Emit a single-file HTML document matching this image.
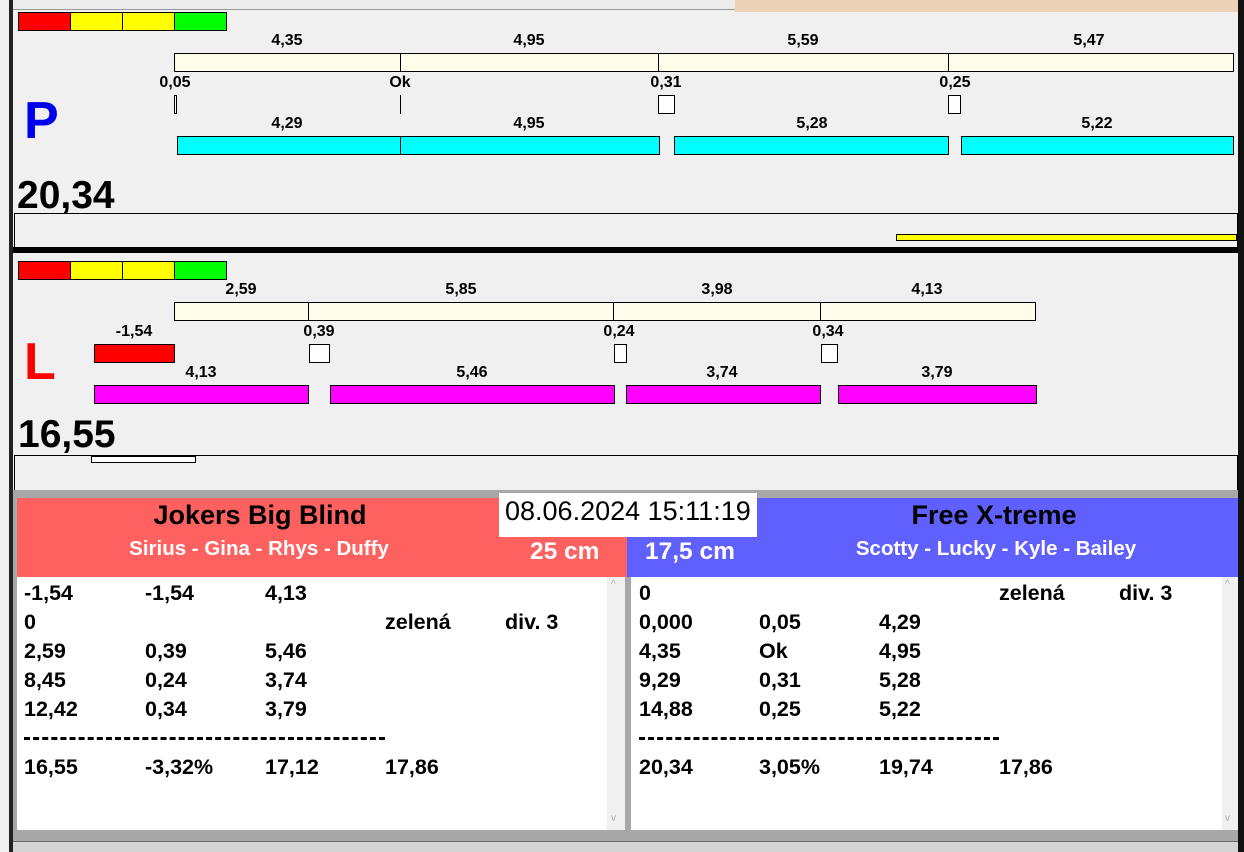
<!DOCTYPE html>
<html><head><meta charset="utf-8"><style>
*{margin:0;padding:0;box-sizing:border-box}
body{width:1244px;height:852px;background:#f0f0f0;position:relative;overflow:hidden;font-family:"Liberation Sans",Arial,sans-serif;font-weight:bold;color:#000}
div,span{position:absolute}
.b{border:1px solid #000}
.lb{font-size:16px;transform:translateX(-50%);white-space:nowrap;line-height:18px}
.bg{background:#fffdea}
.cy{background:#00ffff}
.mg{background:#ff00ff}
.row{font-size:21.5px;line-height:29px;white-space:nowrap}
</style></head><body>
<div style="left:9px;top:0;width:4px;height:852px;background:#222"></div>
<div style="left:1238px;top:0;width:6px;height:852px;background:#111"></div>
<div style="left:13px;top:0;width:722px;height:10px;background:#ececec;border-bottom:1px solid #999"></div>
<div style="left:735px;top:0;width:503px;height:12px;background:#eed2b8"></div>
<!-- P panel -->
<div style="left:18px;top:12px;width:53px;height:19px;background:#f00" class="b"></div>
<div style="left:70px;top:12px;width:53px;height:19px;background:#ff0" class="b"></div>
<div style="left:122px;top:12px;width:53px;height:19px;background:#ff0" class="b"></div>
<div style="left:174px;top:12px;width:53px;height:19px;background:#0f0" class="b"></div>

<span class="lb" style="left:287px;top:32px">4,35</span>
<span class="lb" style="left:529px;top:32px">4,95</span>
<span class="lb" style="left:803px;top:32px">5,59</span>
<span class="lb" style="left:1089px;top:32px">5,47</span>
<div class="b bg" style="left:174px;top:53px;width:227px;height:19px"></div>
<div class="b bg" style="left:400px;top:53px;width:259px;height:19px"></div>
<div class="b bg" style="left:658px;top:53px;width:291px;height:19px"></div>
<div class="b bg" style="left:948px;top:53px;width:286px;height:19px"></div>

<span class="lb" style="left:175px;top:74px">0,05</span>
<span class="lb" style="left:400px;top:74px">Ok</span>
<span class="lb" style="left:666px;top:74px">0,31</span>
<span class="lb" style="left:955px;top:74px">0,25</span>
<div class="b" style="left:174px;top:95px;width:3px;height:19px;background:#fff"></div>
<div style="left:400px;top:95px;width:1px;height:19px;background:#000"></div>
<div class="b" style="left:658px;top:95px;width:17px;height:19px;background:#fff"></div>
<div class="b" style="left:948px;top:95px;width:13px;height:19px;background:#fff"></div>

<span style="left:24px;top:91px;font-size:52px;color:#0000ee;line-height:60px">P</span>
<span class="lb" style="left:287px;top:115px">4,29</span>
<span class="lb" style="left:529px;top:115px">4,95</span>
<span class="lb" style="left:812px;top:115px">5,28</span>
<span class="lb" style="left:1097px;top:115px">5,22</span>
<div class="b cy" style="left:177px;top:136px;width:224px;height:19px"></div>
<div class="b cy" style="left:400px;top:136px;width:260px;height:19px"></div>
<div class="b cy" style="left:674px;top:136px;width:275px;height:19px"></div>
<div class="b cy" style="left:961px;top:136px;width:273px;height:19px"></div>

<span style="left:17px;top:175px;font-size:39px;line-height:42px">20,34</span>
<div style="left:14px;top:213px;width:1224px;height:34px;border-top:1px solid #000;border-left:1px solid #000;border-right:1px solid #000"></div>
<div class="b" style="left:896px;top:234px;width:341px;height:7px;background:#ff0"></div>
<div style="left:13px;top:247px;width:1225px;height:6px;background:#000"></div>

<!-- L panel -->
<div style="left:18px;top:261px;width:53px;height:19px;background:#f00" class="b"></div>
<div style="left:70px;top:261px;width:53px;height:19px;background:#ff0" class="b"></div>
<div style="left:122px;top:261px;width:53px;height:19px;background:#ff0" class="b"></div>
<div style="left:174px;top:261px;width:53px;height:19px;background:#0f0" class="b"></div>

<span class="lb" style="left:241px;top:281px">2,59</span>
<span class="lb" style="left:461px;top:281px">5,85</span>
<span class="lb" style="left:717px;top:281px">3,98</span>
<span class="lb" style="left:927px;top:281px">4,13</span>
<div class="b bg" style="left:174px;top:302px;width:136px;height:19px"></div>
<div class="b bg" style="left:308px;top:302px;width:307px;height:19px"></div>
<div class="b bg" style="left:613px;top:302px;width:209px;height:19px"></div>
<div class="b bg" style="left:820px;top:302px;width:216px;height:19px"></div>

<span class="lb" style="left:134px;top:323px">-1,54</span>
<span class="lb" style="left:319px;top:323px">0,39</span>
<span class="lb" style="left:619px;top:323px">0,24</span>
<span class="lb" style="left:828px;top:323px">0,34</span>
<div class="b" style="left:94px;top:344px;width:81px;height:19px;background:#f00"></div>
<div class="b" style="left:309px;top:344px;width:21px;height:19px;background:#fff"></div>
<div class="b" style="left:614px;top:344px;width:13px;height:19px;background:#fff"></div>
<div class="b" style="left:821px;top:344px;width:17px;height:19px;background:#fff"></div>

<span style="left:24px;top:332px;font-size:52px;color:#f00;line-height:60px">L</span>
<span class="lb" style="left:201px;top:364px">4,13</span>
<span class="lb" style="left:472px;top:364px">5,46</span>
<span class="lb" style="left:722px;top:364px">3,74</span>
<span class="lb" style="left:937px;top:364px">3,79</span>
<div class="b mg" style="left:94px;top:385px;width:215px;height:19px"></div>
<div class="b mg" style="left:330px;top:385px;width:285px;height:19px"></div>
<div class="b mg" style="left:626px;top:385px;width:195px;height:19px"></div>
<div class="b mg" style="left:838px;top:385px;width:199px;height:19px"></div>

<span style="left:18px;top:414px;font-size:39px;line-height:42px">16,55</span>
<div style="left:14px;top:455px;width:1224px;height:35px;border-top:1px solid #000;border-left:1px solid #000;border-right:1px solid #000"></div>
<div class="b" style="left:91px;top:456px;width:105px;height:7px;background:#fff"></div>

<!-- bottom -->
<div style="left:13px;top:490px;width:1225px;height:362px;background:#a8a8a8"></div>
<div style="left:17px;top:498px;width:610px;height:79px;background:#ff6060"></div>
<div style="left:627px;top:498px;width:611px;height:79px;background:#6060ff"></div>
<span style="left:260px;top:499px;transform:translateX(-50%);font-size:27px;line-height:32px;white-space:nowrap">Jokers Big Blind</span>
<span style="left:259px;top:537px;transform:translateX(-50%);font-size:20.5px;color:#fff;line-height:24px;white-space:nowrap">Sirius - Gina - Rhys - Duffy</span>
<span style="left:530px;top:538px;font-size:24.5px;color:#fff;line-height:28px">25 cm</span>
<span style="left:994px;top:499px;transform:translateX(-50%);font-size:27px;line-height:32px;white-space:nowrap">Free X-treme</span>
<span style="left:996px;top:537px;transform:translateX(-50%);font-size:20.5px;color:#fff;line-height:24px;white-space:nowrap">Scotty - Lucky - Kyle - Bailey</span>
<span style="left:645px;top:538px;font-size:24.5px;color:#fff;line-height:28px">17,5 cm</span>
<div style="left:499px;top:493px;width:258px;height:44px;background:#fff"></div>
<span style="left:505px;top:495px;font-size:27px;font-weight:normal;line-height:32px;white-space:nowrap">08.06.2024 15:11:19</span>

<div style="left:17px;top:577px;width:590px;height:253px;background:#fff"></div>
<div style="left:607px;top:577px;width:18px;height:253px;background:#f0f0f0"><span style="left:4px;top:2px;font-size:10px;color:#aaa;font-weight:normal">^</span><span style="left:4px;top:236px;font-size:10px;color:#aaa;font-weight:normal">v</span></div>
<div style="left:631px;top:577px;width:591px;height:253px;background:#fff"></div>
<div style="left:1222px;top:577px;width:16px;height:253px;background:#f0f0f0"><span style="left:3px;top:2px;font-size:10px;color:#aaa;font-weight:normal">^</span><span style="left:3px;top:236px;font-size:10px;color:#aaa;font-weight:normal">v</span></div>

<div style="left:24px;top:579px">
<span class="row" style="left:0;top:0">-1,54</span><span class="row" style="left:121px;top:0">-1,54</span><span class="row" style="left:241px;top:0">4,13</span>
<span class="row" style="left:0;top:29px">0</span><span class="row" style="left:361px;top:29px">zelená</span><span class="row" style="left:481px;top:29px">div. 3</span>
<span class="row" style="left:0;top:58px">2,59</span><span class="row" style="left:121px;top:58px">0,39</span><span class="row" style="left:241px;top:58px">5,46</span>
<span class="row" style="left:0;top:87px">8,45</span><span class="row" style="left:121px;top:87px">0,24</span><span class="row" style="left:241px;top:87px">3,74</span>
<span class="row" style="left:0;top:116px">12,42</span><span class="row" style="left:121px;top:116px">0,34</span><span class="row" style="left:241px;top:116px">3,79</span>
<div style="left:0;top:158px;width:361px;border-top:3px dashed #000"></div>
<span class="row" style="left:0;top:174px">16,55</span><span class="row" style="left:121px;top:174px">-3,32%</span><span class="row" style="left:241px;top:174px">17,12</span><span class="row" style="left:361px;top:174px">17,86</span>
</div>
<div style="left:639px;top:579px">
<span class="row" style="left:0;top:0">0</span><span class="row" style="left:360px;top:0">zelená</span><span class="row" style="left:480px;top:0">div. 3</span>
<span class="row" style="left:0;top:29px">0,000</span><span class="row" style="left:120px;top:29px">0,05</span><span class="row" style="left:240px;top:29px">4,29</span>
<span class="row" style="left:0;top:58px">4,35</span><span class="row" style="left:120px;top:58px">Ok</span><span class="row" style="left:240px;top:58px">4,95</span>
<span class="row" style="left:0;top:87px">9,29</span><span class="row" style="left:120px;top:87px">0,31</span><span class="row" style="left:240px;top:87px">5,28</span>
<span class="row" style="left:0;top:116px">14,88</span><span class="row" style="left:120px;top:116px">0,25</span><span class="row" style="left:240px;top:116px">5,22</span>
<div style="left:0;top:158px;width:360px;border-top:3px dashed #000"></div>
<span class="row" style="left:0;top:174px">20,34</span><span class="row" style="left:120px;top:174px">3,05%</span><span class="row" style="left:240px;top:174px">19,74</span><span class="row" style="left:360px;top:174px">17,86</span>
</div>
<div style="left:13px;top:841px;width:1225px;height:1px;background:#666"></div>
<div style="left:13px;top:842px;width:1225px;height:10px;background:#d4d4d4"></div>
</body></html>
